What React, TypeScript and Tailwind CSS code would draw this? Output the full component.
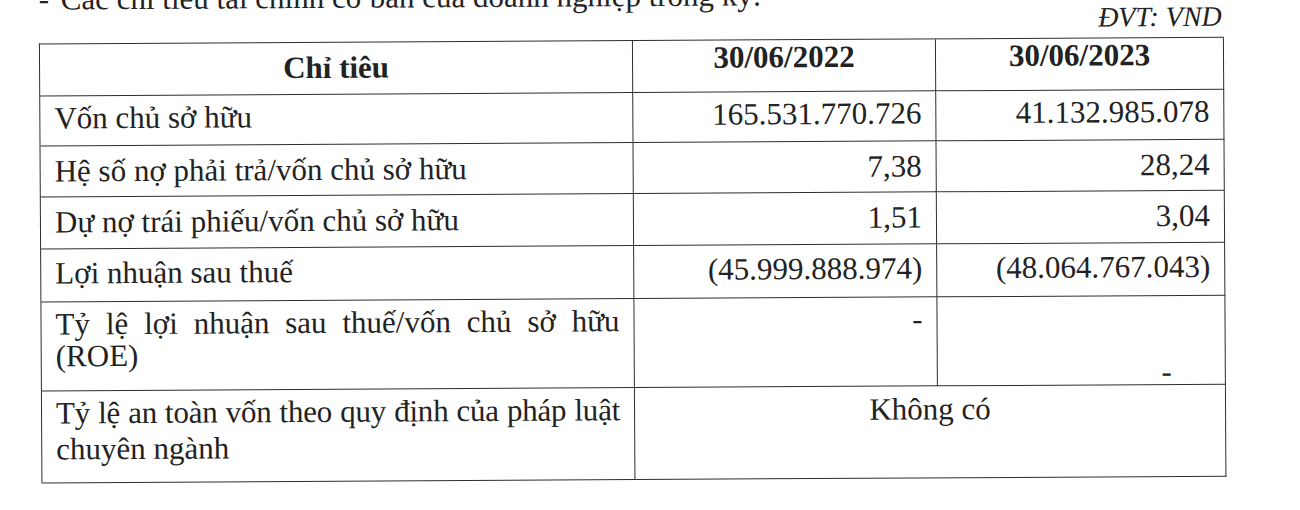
import React from "react";

const serif = { fontFamily: '"Liberation Serif", "Times New Roman", serif' };

function Cell({
  children,
  className = "",
}: {
  children?: React.ReactNode;
  className?: string;
}) {
  return (
    <div className={`border-r border-b border-[#2e2e2e] ${className}`}>{children}</div>
  );
}

export default function App() {
  return (
    <div className="w-[1300px] h-[510px] overflow-hidden bg-white text-[#222]" style={serif}>
      <div className="w-[1300px] origin-center -rotate-[0.33deg] pl-[40px]">
        <div className="-mt-[21px] flex text-[31px] leading-[33px] whitespace-nowrap">
          <span className="w-[22px]">-</span>
          <span>Các chỉ tiêu tài chính cơ bản của doanh nghiệp trong kỳ:</span>
        </div>
        <div className="-mt-[9px] w-[1185px] text-right text-[28px] italic leading-[33px] pr-[2px]">
          ĐVT: VND
        </div>
        <div className="mt-[4px] grid w-[1185px] grid-cols-[593px_303px_288px] grid-rows-[52px_50px_51px_52px_53px_89px_92px] border-l border-t border-[#2e2e2e] text-[31px] leading-[33px]">
          {/* header */}
          <Cell className="flex items-center justify-center pb-[2px] font-bold text-[31px]">Chỉ tiêu</Cell>
          <Cell className="pt-[2px] text-center font-bold text-[31px] leading-[30px]">30/06/2022</Cell>
          <Cell className="pt-[2px] text-center font-bold text-[31px] leading-[30px]">30/06/2023</Cell>

          <Cell className="pl-[14px] pt-[5px]">Vốn chủ sở hữu</Cell>
          <Cell className="pr-[14px] pt-[5px] text-right">165.531.770.726</Cell>
          <Cell className="pr-[14px] pt-[5px] text-right">41.132.985.078</Cell>

          <Cell className="pl-[14px] pt-[8px]">Hệ số nợ phải trả/vốn chủ sở hữu</Cell>
          <Cell className="pr-[14px] pt-[8px] text-right">7,38</Cell>
          <Cell className="pr-[14px] pt-[8px] text-right">28,24</Cell>

          <Cell className="pl-[14px] pt-[8px]">Dự nợ trái phiếu/vốn chủ sở hữu</Cell>
          <Cell className="pr-[14px] pt-[8px] text-right">1,51</Cell>
          <Cell className="pr-[14px] pt-[8px] text-right">3,04</Cell>

          <Cell className="pl-[14px] pt-[7px]">Lợi nhuận sau thuế</Cell>
          <Cell className="pr-[14px] pt-[7px] text-right">(45.999.888.974)</Cell>
          <Cell className="pr-[14px] pt-[7px] text-right">(48.064.767.043)</Cell>

          <Cell className="pl-[14px] pr-[14px] pt-[6px] leading-[32px]">
            <span className="block whitespace-nowrap text-justify [text-align-last:justify]">
              Tỷ lệ lợi nhuận sau thuế/vốn chủ sở hữu
            </span>
            <span className="block">(ROE)</span>
          </Cell>
          <Cell className="pr-[14px] pt-[6px] text-right leading-[32px]">-</Cell>
          <Cell className="flex flex-col justify-end pr-[53px] pb-[0px] text-right leading-[24px]">
            <span>-</span>
          </Cell>

          <Cell className="pl-[14px] pr-[14px] pt-[4px] leading-[36px]">
            <span className="block whitespace-nowrap text-justify [text-align-last:justify] tracking-[-0.2px]">
              Tỷ lệ an toàn vốn theo quy định của pháp luật
            </span>
            <span className="block">chuyên ngành</span>
          </Cell>
          <Cell className="col-span-2 pt-[6px] text-center">Không có</Cell>
        </div>
      </div>
    </div>
  );
}
